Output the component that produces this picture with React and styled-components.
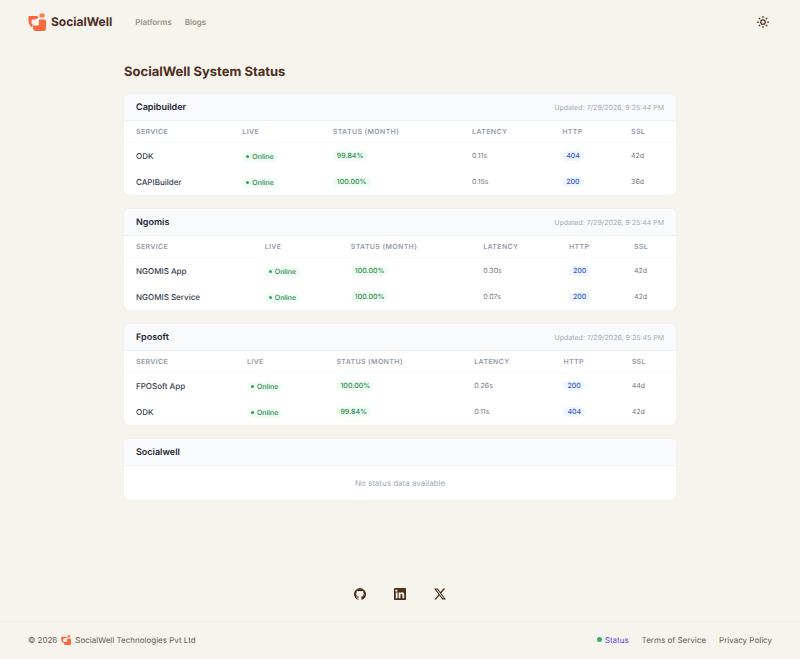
import React from "react";
import styled, { createGlobalStyle } from "styled-components";

const GlobalStyle = createGlobalStyle`
  *, *::before, *::after { box-sizing: border-box; }
  body {
    margin: 0;
    background: #f7f4ed;
    color: #4b2e1e;
    font-family: Inter, "Liberation Sans", sans-serif;
    font-size: 8px;
    line-height: 12px;
    text-rendering: geometricPrecision;
  }
  a { color: inherit; text-decoration: none; }
`;

const Page = styled.div`
  display: flex;
  flex-direction: column;
  min-height: 100vh;
`;

const Header = styled.header`
  display: flex;
  align-items: center;
  height: 44px;
  padding: 0 28px;
`;

const Brand = styled.a`
  display: flex;
  align-items: center;
  gap: 5px;
  color: #4b2e1e;
  font-size: 12px;
  font-weight: 700;
  line-height: 20px;
`;

const Nav = styled.nav`
  display: flex;
  gap: 13px;
  margin-left: 23px;
  color: #8f8176;
  font-weight: 500;
`;

const ThemeButton = styled.button`
  display: flex;
  margin-left: auto;
  padding: 3px;
  border: 0;
  background: none;
  color: #4b2e1e;
`;

const Main = styled.main`
  width: 100%;
  max-width: 600px;
  margin: 0 auto;
  padding: 18px 24px 0;
`;

const Title = styled.h1`
  margin: 0 0 12px;
  font-size: 13px;
  font-weight: 700;
  line-height: 20px;
`;

const CardList = styled.div`
  display: flex;
  flex-direction: column;
  gap: 14px;
`;

const Card = styled.section`
  overflow: hidden;
  border-radius: 6px;
  background: #fff;
  box-shadow: 0 0 0 1px #f3f1ed;
`;

const CardHead = styled.div`
  display: flex;
  align-items: center;
  justify-content: space-between;
  height: 27px;
  padding: 2px 12px 0;
  border-bottom: 1px solid #eef0f3;
  background: #f8fafc;
`;

const CardTitle = styled.h2`
  margin: 0;
  color: #1e2433;
  font-size: 9px;
  font-weight: 600;
`;

const Updated = styled.span`
  color: #a3abb9;
  font-size: 7px;
`;

const Table = styled.table`
  width: 100%;
  border-collapse: separate;
  border-spacing: 0;
  text-align: left;
`;

const HeadCell = styled.th`
  height: 22px;
  padding: 0 10px 0 12px;
  border-bottom: 1px solid #f8fafc;
  color: #949cab;
  font-size: 7px;
  font-weight: 600;
  letter-spacing: 0.05em;
  text-transform: uppercase;
`;

const Cell = styled.td`
  height: 26px;
  padding: 0 10px 0 12px;
  color: #717887;
  font-size: 7px;
`;

const ServiceCell = styled(Cell)`
  color: #353d4e;
  font-size: 8px;
  font-weight: 500;
`;

const badgeTones = {
  green: { background: "#f0fdf4", color: "#2b8a4b" },
  blue: { background: "#eff6ff", color: "#3457c9" },
};

const Badge = styled.span`
  display: inline-flex;
  align-items: center;
  gap: 3px;
  height: 10px;
  padding: 0 4px;
  border-radius: 5px;
  background: ${(p) => badgeTones[p.$tone].background};
  color: ${(p) => badgeTones[p.$tone].color};
  font-weight: 500;
`;

const Dot = styled.span`
  width: ${(p) => p.$size}px;
  height: ${(p) => p.$size}px;
  border-radius: 50%;
  background: ${(p) => p.$color};
`;

const Empty = styled.p`
  margin: 0;
  padding: 11px;
  color: #a3abb9;
  text-align: center;
`;

const Footer = styled.footer`
  margin-top: auto;
`;

const Socials = styled.div`
  display: flex;
  justify-content: center;
  gap: 28px;
  padding-bottom: 21px;
`;

const SocialLink = styled.a`
  display: flex;
`;

const FooterBar = styled.div`
  display: flex;
  align-items: center;
  justify-content: space-between;
  height: 38px;
  padding: 0 28px 2px;
  border-top: 1px solid #efece6;
  color: #65594f;
`;

const FooterGroup = styled.div`
  display: flex;
  align-items: center;
  gap: ${(p) => p.$gap}px;
`;

const StatusLink = styled.a`
  display: flex;
  align-items: center;
  gap: 3px;
  color: #5f45dc;
`;

function Mark({ size }) {
  return (
    <svg width={size} height={size} viewBox="0 0 36 36" aria-hidden="true">
      <path
        fill="#f9643f"
        d="M3 6h15q2 0 2 2v3h-2l-5 2H9q-2 0-2 2v5q0 2 2 2v6q-3 0-5-3-3-4-3-9V8q0-2 2-2z"
      />
      <path
        fill="#fb6a3e"
        d="M22 13h10q4 0 4 4v15q0 4-4 4H16q-6 0-6-6v-5h9q3 0 3-3z"
      />
      <path fill="#fb7a4a" d="M25 1h6q2 0 2 2v4q0 2-2 2h-6q-2 0-2-2V3q0-2 2-2z" />
    </svg>
  );
}

function SunIcon() {
  return (
    <svg width="12" height="12" viewBox="0 0 24 24" fill="none" stroke="currentColor" strokeWidth="2.5" strokeLinecap="round" aria-hidden="true">
      <circle cx="12" cy="12" r="4.5" />
      <path d="M12 1v2M12 21v2M1 12h2M21 12h2M4.2 4.2l1.4 1.4M18.4 18.4l1.4 1.4M4.2 19.8l1.4-1.4M18.4 5.6l1.4-1.4" />
    </svg>
  );
}

const socials = [
  {
    name: "GitHub",
    path: "M12 .5C5.4.5 0 5.8 0 12.4c0 5.200 3.400 9.700 8.200 11.300.6.100.8-.3.8-.6v-2.200c-3.300.7-4-1.400-4-1.400-.6-1.400-1.400-1.800-1.400-1.800-1-.7.100-.7.100-.7 1.200.1 1.800 1.200 1.800 1.200 1.100 1.800 2.800 1.300 3.500 1 .1-.8.400-1.300.8-1.600-2.700-.3-5.500-1.300-5.500-5.900 0-1.300.5-2.400 1.200-3.200-.1-.3-.5-1.500.1-3.200 0 0 1-.3 3.300 1.200a11.500 11.500 0 0 1 6 0c2.300-1.500 3.300-1.200 3.300-1.200.7 1.700.2 2.900.1 3.200.8.800 1.200 1.900 1.200 3.200 0 4.600-2.800 5.600-5.500 5.900.4.400.8 1.100.8 2.200v3.300c0 .3.200.7.8.6A12 12 0 0 0 24 12.400C24 5.800 18.600.5 12 .5z",
  },
  {
    name: "LinkedIn",
    path: "M20.400 20.500h-3.500v-5.600c0-1.300 0-3-1.900-3s-2.100 1.400-2.100 2.900v5.700H9.300V9h3.400v1.600c.5-.9 1.600-1.900 3.400-1.900 3.600 0 4.300 2.400 4.300 5.500zM5.300 7.400a2.100 2.100 0 1 1 0-4.100 2.100 2.100 0 0 1 0 4.100zM7.100 20.500H3.600V9h3.500zM22.200 0H1.800C.8 0 0 .8 0 1.700v20.600c0 .9.8 1.700 1.800 1.700h20.400c1 0 1.800-.8 1.800-1.700V1.700c0-.9-.8-1.700-1.800-1.700z",
  },
  {
    name: "X",
    path: "M18.900 1.200h3.700l-8 9.200L24 22.800h-7.400l-5.800-7.600-6.600 7.600H.5l8.600-9.800L0 1.200h7.600l5.200 6.900zm-1.300 19.500h2L6.500 3.200H4.300z",
  },
];

const groups = [
  {
    name: "Capibuilder",
    updated: "7/29/2026, 9:25:44 PM",
    services: [
      { name: "ODK", month: "99.84%", latency: "0.11s", http: "404", ssl: "42d" },
      { name: "CAPIBuilder", month: "100.00%", latency: "0.15s", http: "200", ssl: "36d" },
    ],
  },
  {
    name: "Ngomis",
    updated: "7/29/2026, 9:25:44 PM",
    services: [
      { name: "NGOMIS App", month: "100.00%", latency: "0.30s", http: "200", ssl: "42d" },
      { name: "NGOMIS Service", month: "100.00%", latency: "0.07s", http: "200", ssl: "42d" },
    ],
  },
  {
    name: "Fposoft",
    updated: "7/29/2026, 9:25:45 PM",
    services: [
      { name: "FPOSoft App", month: "100.00%", latency: "0.26s", http: "200", ssl: "44d" },
      { name: "ODK", month: "99.84%", latency: "0.11s", http: "404", ssl: "42d" },
    ],
  },
  { name: "Socialwell", services: [] },
];

const columns = ["Service", "Live", "Status (Month)", "Latency", "HTTP", "SSL"];

function StatusTable({ services }) {
  return (
    <Table>
      <thead>
        <tr>
          {columns.map((c) => (
            <HeadCell key={c} scope="col">{c}</HeadCell>
          ))}
        </tr>
      </thead>
      <tbody>
        {services.map((s) => (
          <tr key={s.name}>
            <ServiceCell>{s.name}</ServiceCell>
            <Cell>
              <Badge $tone="green">
                <Dot $size={3} $color="#2fa35c" />
                Online
              </Badge>
            </Cell>
            <Cell><Badge $tone="green">{s.month}</Badge></Cell>
            <Cell>{s.latency}</Cell>
            <Cell><Badge $tone="blue">{s.http}</Badge></Cell>
            <Cell>{s.ssl}</Cell>
          </tr>
        ))}
      </tbody>
    </Table>
  );
}

export default function App() {
  return (
    <Page>
      <GlobalStyle />
      <Header>
        <Brand href="#">
          <Mark size={18} />
          SocialWell
        </Brand>
        <Nav>
          <a href="#platforms">Platforms</a>
          <a href="#blogs">Blogs</a>
        </Nav>
        <ThemeButton type="button" aria-label="Toggle theme">
          <SunIcon />
        </ThemeButton>
      </Header>
      <Main>
        <Title>SocialWell System Status</Title>
        <CardList>
          {groups.map((g) => (
            <Card key={g.name}>
              <CardHead>
                <CardTitle>{g.name}</CardTitle>
                {g.updated && <Updated>Updated: {g.updated}</Updated>}
              </CardHead>
              {g.services.length > 0 ? (
                <StatusTable services={g.services} />
              ) : (
                <Empty>No status data available</Empty>
              )}
            </Card>
          ))}
        </CardList>
      </Main>
      <Footer>
        <Socials>
          {socials.map((s) => (
            <SocialLink key={s.name} href={"#" + s.name.toLowerCase()} aria-label={s.name}>
              <svg width="12" height="12" viewBox="0 0 24 24" fill="currentColor" aria-hidden="true">
                <path d={s.path} />
              </svg>
            </SocialLink>
          ))}
        </Socials>
        <FooterBar>
          <FooterGroup $gap={4}>
            <span>© 2026</span>
            <Mark size={10} />
            <span>SocialWell Technologies Pvt Ltd</span>
          </FooterGroup>
          <FooterGroup $gap={13}>
            <StatusLink href="#status">
              <Dot $size={5} $color="#31b267" />
              Status
            </StatusLink>
            <a href="#terms">Terms of Service</a>
            <a href="#privacy">Privacy Policy</a>
          </FooterGroup>
        </FooterBar>
      </Footer>
    </Page>
  );
}
